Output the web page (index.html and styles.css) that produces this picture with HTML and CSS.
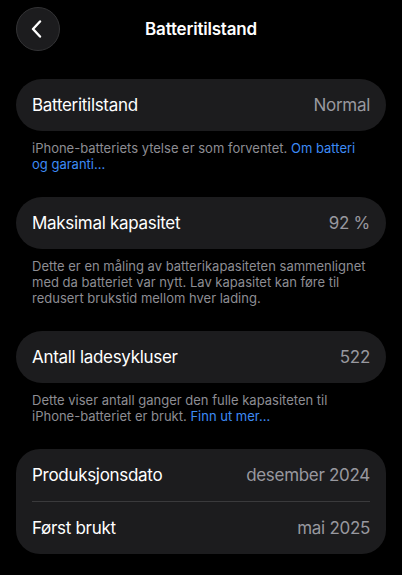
FILE: index.html
```html
<!DOCTYPE html>
<html lang="nb">
<head>
  <meta charset="UTF-8" />
  <meta name="viewport" content="width=device-width, initial-scale=1.0" />
  <title>Batteritilstand</title>
  <link rel="stylesheet" href="styles.css">
</head>
<body>
  <div class="screen">
    <header class="nav-bar">
      <button class="back-btn" aria-label="Tilbake">
        <svg width="14" height="18" viewBox="0 0 14 18">
          <path d="M10 1.5 L3 9 L10 16.5" fill="none" stroke="#fff" stroke-width="2.4" stroke-linecap="round" stroke-linejoin="round"/>
        </svg>
      </button>
      <h1>Batteritilstand</h1>
      <span></span>
    </header>

    <section class="group">
      <div class="card">
        <div class="row"><span>Batteritilstand</span><span class="value">Normal</span></div>
      </div>
      <p class="note">iPhone-batteriets ytelse er som forventet. <a href="#">Om batteri og garanti…</a></p>
    </section>

    <section class="group">
      <div class="card">
        <div class="row"><span>Maksimal kapasitet</span><span class="value">92 %</span></div>
      </div>
      <p class="note">Dette er en måling av batterikapasiteten sammenlignet med da batteriet var nytt. Lav kapasitet kan føre til redusert brukstid mellom hver lading.</p>
    </section>

    <section class="group">
      <div class="card">
        <div class="row"><span>Antall ladesykluser</span><span class="value">522</span></div>
      </div>
      <p class="note">Dette viser antall ganger den fulle kapasiteten til iPhone-batteriet er brukt. <a href="#">Finn ut mer…</a></p>
    </section>

    <section class="group">
      <div class="card card-list">
        <div class="row"><span>Produksjonsdato</span><span class="value">desember 2024</span></div>
        <div class="row"><span>Først brukt</span><span class="value">mai 2025</span></div>
      </div>
    </section>
  </div>
</body>
</html>
```

FILE: styles.css
```css
/* Base */
* { margin: 0; padding: 0; box-sizing: border-box; }
body {
  font-family: Inter, "Noto Sans", sans-serif;
  background: #000;
  color: #fff;
}
.screen {
  padding: 7px 16px 0;
}

/* Navigation bar */
.nav-bar {
  display: grid;
  grid-template-columns: 44px 1fr 44px;
  align-items: center;
  height: 44px;
}
.nav-bar h1 {
  text-align: center;
  font-size: 17px;
  font-weight: 600;
  letter-spacing: -0.2px;
}
.back-btn {
  width: 44px;
  height: 44px;
  border-radius: 50%;
  background: #1c1c1e;
  border: 1px solid #333335;
  display: flex;
  align-items: center;
  justify-content: center;
  padding-right: 3px;
}

/* Groups */
.group {
  margin-top: 28px;
}
.group + .group {
  margin-top: 25px;
}
.card {
  background: #1c1c1e;
  border-radius: 26px;
  padding: 0 16px;
}
.card-list {
  border-radius: 24px;
}
.row {
  display: flex;
  justify-content: space-between;
  align-items: center;
  height: 52px;
  font-size: 17px;
  letter-spacing: -0.3px;
}
.card-list .row + .row {
  border-top: 1px solid #3a3a3c;
  height: 53px;
}
.value {
  color: #98989f;
}

/* Footnotes */
.note {
  padding: 9px 16px 0;
  font-size: 13px;
  line-height: 16px;
  color: #8d8d93;
}
.note a {
  color: #3d8bf5;
  text-decoration: none;
}
```
